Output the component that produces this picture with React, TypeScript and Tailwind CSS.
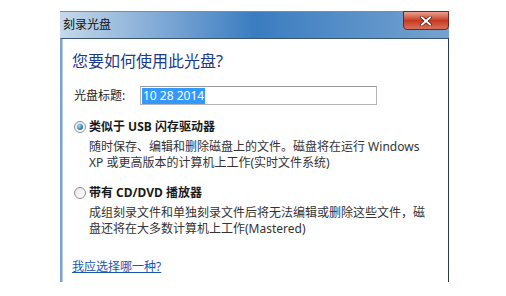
import React from 'react'

const font = { fontFamily: '"Noto Sans", "Noto Sans CJK SC", sans-serif' }

function Radio({ checked }: { checked?: boolean }) {
  return (
    <div className="mt-[2px] flex h-[12px] w-[12px] shrink-0 items-center justify-center rounded-full border border-[#8f8f8f] bg-gradient-to-br from-[#e6e6e6] to-[#ffffff]">
      {checked && (
        <div className="h-[6px] w-[6px] rounded-full bg-[radial-gradient(circle_at_35%_35%,#9ee0fb,#2a7fc0_60%,#14507f)]" />
      )}
    </div>
  )
}

function Option({
  checked,
  title,
  lines,
}: {
  checked?: boolean
  title: string
  lines: string[]
}) {
  return (
    <div className="flex gap-[2px] pl-[2px]">
      <Radio checked={checked} />
      <div className="ml-[1px] flex flex-col">
        <div className="text-[12px] font-bold leading-[16px] text-[#1a1a1a]">{title}</div>
        <div className="mt-[4px] text-[12px] leading-[16px] text-[#333]">
          {lines.map((l) => (
            <div key={l} className="whitespace-nowrap">
              {l}
            </div>
          ))}
        </div>
      </div>
    </div>
  )
}

export default function App() {
  return (
    <div className="h-[296px] w-[506px] overflow-hidden bg-white" style={font}>
      <div className="ml-[60px] mt-[11px] flex h-[271px] w-[389px] flex-col">
        {/* title bar */}
        <div className="relative flex h-[27px] shrink-0 items-start border-t border-[#6f8fb0] bg-gradient-to-r from-[#c6d9ea] via-[#3a7cc0] to-[#74a3d0] pl-[3px]">
          <span className="mt-[5px] text-[12px] leading-[16px] text-[#111]">刻录光盘</span>
          <div className="absolute right-0 top-[-1px] flex h-[19px] w-[46px] items-center justify-center rounded-b-[4px] border border-[#6b2a20] bg-gradient-to-b from-[#e9a18f] via-[#c7371f] to-[#d9705a]">
            <svg width="12" height="10" viewBox="0 0 12 10">
              <path d="M2 1.5 L10 8.5 M10 1.5 L2 8.5" stroke="#3a1010" strokeWidth="3.2" strokeLinecap="square" />
              <path d="M2 1.5 L10 8.5 M10 1.5 L2 8.5" stroke="#ffffff" strokeWidth="2" strokeLinecap="square" />
            </svg>
          </div>
        </div>
        {/* content */}
        <div className="flex flex-1 border-l-[2px] border-r border-t border-l-[#7ba3cc] border-r-[#2b3b4e] border-t-[#3b5670] bg-white">
          <div className="flex flex-1 flex-col border-l border-[#b9cde0] pl-[9px]">
            <div className="mt-[12px] text-[16px] leading-[20px] text-[#1b3a8c]">您要如何使用此光盘?</div>
            <div className="mt-[15px] flex items-center">
              <span className="ml-[2px] w-[66px] text-[12px] leading-[16px] text-[#222]">光盘标题:</span>
              <div className="flex h-[19px] w-[237px] items-center border border-[#b5b5b5] border-t-[#9a9a9a] px-[1px]">
                <span className="bg-[#3399ff] px-[1px] text-[12px] leading-[16px] text-white">10 28 2014</span>
              </div>
            </div>
            <div className="mt-[14px]">
              <Option
                checked
                title="类似于 USB 闪存驱动器"
                lines={['随时保存、编辑和删除磁盘上的文件。磁盘将在运行 Windows', 'XP 或更高版本的计算机上工作(实时文件系统)']}
              />
            </div>
            <div className="mt-[14px]">
              <Option
                title="带有 CD/DVD 播放器"
                lines={['成组刻录文件和单独刻录文件后将无法编辑或删除这些文件，磁', '盘还将在大多数计算机上工作(Mastered)']}
              />
            </div>
            <a className="mt-[22px] w-fit text-[12px] leading-[16px] text-[#1a56b0] underline" href="#">
              我应选择哪一种?
            </a>
          </div>
        </div>
      </div>
    </div>
  )
}
